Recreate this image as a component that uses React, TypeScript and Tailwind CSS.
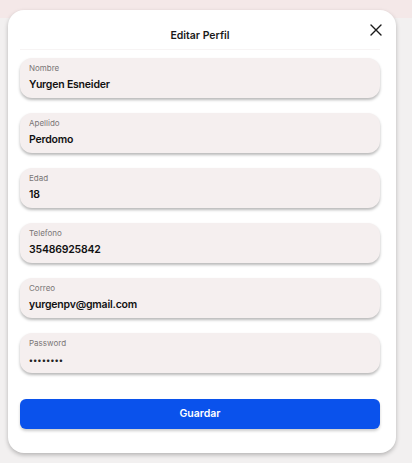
import React from 'react';

const fields = [
  { label: 'Nombre', value: 'Yurgen Esneider' },
  { label: 'Apellido', value: 'Perdomo' },
  { label: 'Edad', value: '18' },
  { label: 'Telefono', value: '35486925842' },
  { label: 'Correo', value: 'yurgenpv@gmail.com' },
  { label: 'Password', value: '••••••••', secret: true },
];

const Field: React.FC<{ label: string; value: string; secret?: boolean }> = ({ label, value, secret }) => (
  <div className="h-[40px] rounded-xl bg-[#f5efef] px-[9px] pt-[5px] shadow-[0_2px_3px_rgba(0,0,0,0.28)]">
    <div className="text-[8px] leading-[10px] text-[#7a7676]">{label}</div>
    {secret ? (
      <div className="mt-[4px] text-[8px] leading-[16px] tracking-[0.5px] font-bold text-[#222]">{value}</div>
    ) : (
      <div className="mt-[4px] text-[10.5px] leading-[16px] font-semibold tracking-[-0.2px] text-[#111]">{value}</div>
    )}
  </div>
);

export default function App() {
  return (
    <div
      className="min-h-[463px] w-[412px] bg-[linear-gradient(to_bottom,#f4e8e8_18px,#f2f0f0_18px)] pt-[10px] pl-[8px]"
      style={{ fontFamily: 'Inter, "Noto Sans", sans-serif' }}
    >
      <div className="w-[388px] h-[443px] rounded-[16px] bg-white shadow-[0_2px_4px_rgba(0,0,0,0.25)] pl-[12px] pr-[16px]">
        {/* Header */}
        <div className="relative h-[40px] flex items-center justify-center border-b border-[#f7f4f4]">
          <span className="mt-[13px] text-[10.5px] font-semibold text-[#1a1a1a]">Editar Perfil</span>
          <button className="absolute right-[-2px] top-[14px] text-[#1a1a1a]">
            <svg width="12" height="12" viewBox="0 0 12 12" fill="none" stroke="currentColor" strokeWidth="1.4" strokeLinecap="round">
              <path d="M1 1L11 11M11 1L1 11" />
            </svg>
          </button>
        </div>

        {/* Fields */}
        <div className="mt-[8px] flex flex-col gap-[15px]">
          {fields.map((f) => (
            <Field key={f.label} label={f.label} value={f.value} secret={f.secret} />
          ))}
        </div>

        <button className="mt-[26px] w-full h-[30px] rounded-[6px] bg-[#0a52ec] text-white text-[10.5px] font-semibold shadow-[0_2px_3px_rgba(0,0,0,0.2)]">
          Guardar
        </button>
      </div>
    </div>
  );
}
